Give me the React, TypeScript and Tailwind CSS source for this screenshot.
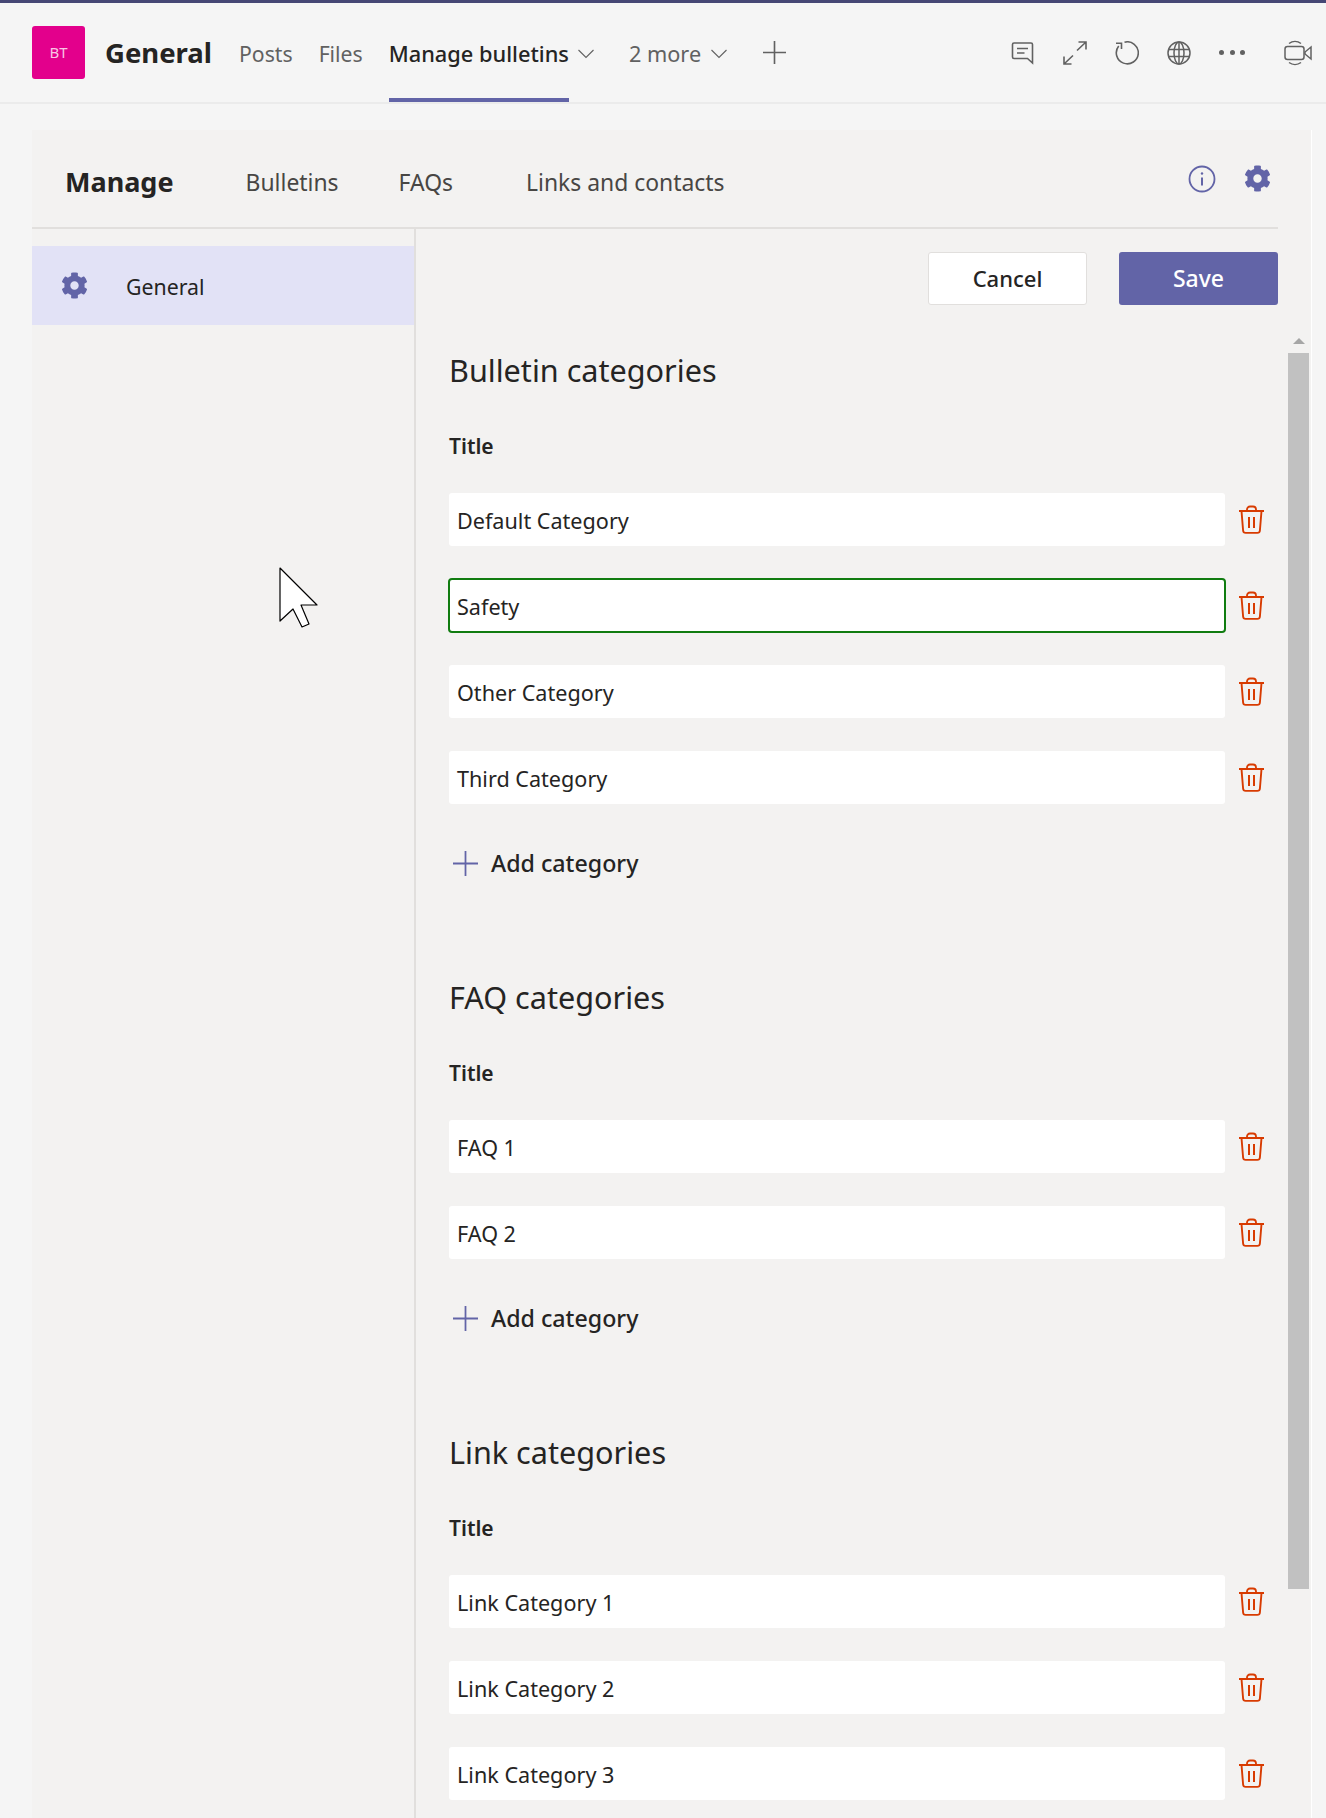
import { FaCog } from "react-icons/fa";

function TrashIcon() {
  return (
    <svg width="25" height="30" viewBox="0 0 25 30" fill="none" stroke="#d83b01" strokeWidth="2" className="shrink-0">
      <path d="M0 6h25" />
      <path d="M8 6V4.5a3 3 0 0 1 3-3h3a3 3 0 0 1 3 3V6" strokeWidth="1.8" />
      <path d="M2.5 6l1.6 19.5a2.6 2.6 0 0 0 2.6 2.4h11.6a2.6 2.6 0 0 0 2.6-2.4L22.5 6" strokeWidth="1.9" />
      <path d="M10 12v11M15 12v11" />
    </svg>
  );
}

function PlusIcon({ size, color }: { size: number; color: string }) {
  return (
    <svg width={size} height={size} viewBox="0 0 24 24" fill="none" stroke={color} strokeWidth="1.7" className="shrink-0">
      <path d="M12 0v24M0 12h24" />
    </svg>
  );
}

function Chevron() {
  return (
    <svg width="16" height="10" viewBox="0 0 16 10" fill="none" stroke="#616161" strokeWidth="1.1" className="shrink-0 mt-[2px]">
      <path d="M.5 1L8 8.5 15.5 1" />
    </svg>
  );
}

function CategoryRow({ value, focused }: { value: string; focused?: boolean }) {
  return (
    <div className="flex items-center mb-[33px]">
      <div
        className={`w-[776px] h-[53px] pt-[3px] bg-white rounded-[3px] flex items-center pl-2 text-[21.6px] text-[#252423] ${
          focused ? "outline-2 outline-[#107c10] -outline-offset-1" : ""
        }`}
      >
        {value}
      </div>
      <div className="ml-[14px]">
        <TrashIcon />
      </div>
    </div>
  );
}

function Section({ title, rows, focusedRow, last }: { title: string; rows: string[]; focusedRow?: number; last?: boolean }) {
  return (
    <div className={last ? "" : "mb-[100px]"}>
      <div className="h-[42px] leading-[40px] text-[30.6px] text-[#252423]">{title}</div>
      <div className="mt-[40px] mb-[33px] h-[28px] leading-[28px] text-[21px] font-semibold text-[#252423]">Title</div>
      {rows.map((r, i) => (
        <CategoryRow key={r} value={r} focused={i === focusedRow} />
      ))}
      {!last && (
        <div className="flex items-center h-[28px] mt-[45px]">
          <div className="ml-[4px]">
            <PlusIcon size={25} color="#6264a7" />
          </div>
          <span className="ml-[13px] text-[23.2px] font-medium text-[#252423]">Add category</span>
        </div>
      )}
    </div>
  );
}

function HeaderIcons() {
  return (
    <div className="ml-auto flex items-center text-[#616161]">
      <svg width="24" height="24" viewBox="0 0 24 24" fill="none" stroke="currentColor" strokeWidth="1.6">
        <path d="M3 2h17a1.5 1.5 0 0 1 1.5 1.5V22l-5-4.5H3A1.5 1.5 0 0 1 1.5 16V3.5A1.5 1.5 0 0 1 3 2z" />
        <path d="M6 7.5h11M6 12h7.5" />
      </svg>
      <svg width="24" height="24" viewBox="0 0 24 24" fill="none" stroke="currentColor" strokeWidth="1.6" className="ml-[28px]">
        <path d="M14 9.5L23 1M15.5 1H23v7.5M10 14.5L1 23M1 15.5V23h7.5" />
      </svg>
      <svg width="24" height="24" viewBox="0 0 24 24" fill="none" stroke="currentColor" strokeWidth="1.6" className="ml-[28px]">
        <path d="M9.5 1.2A11 11 0 1 1 3.7 5" />
        <path d="M1 2.2H6.5V8" />
      </svg>
      <svg width="24" height="24" viewBox="0 0 24 24" fill="none" stroke="currentColor" strokeWidth="1.5" className="ml-[28px]">
        <circle cx="12" cy="12" r="11" />
        <ellipse cx="12" cy="12" rx="5" ry="11" />
        <path d="M12 1v22M1.8 8.5h20.4M1.8 15.5h20.4" />
      </svg>
      <div className="ml-[28px] w-[26px] flex justify-between">
        <span className="w-[5px] h-[5px] rounded-full bg-[#616161]" />
        <span className="w-[5px] h-[5px] rounded-full bg-[#616161]" />
        <span className="w-[5px] h-[5px] rounded-full bg-[#616161]" />
      </div>
      <svg width="28" height="28" viewBox="0 0 28 28" fill="none" stroke="currentColor" strokeWidth="1.5" className="ml-[39px] mr-[14px]">
        <rect x="1" y="7.5" width="19" height="13" rx="2.5" />
        <path d="M27 8v12l-6-5v-2z" />
        <path d="M5 4.5A10 10 0 0 1 17 4.5M5 23.5a10 10 0 0 0 12 0" />
      </svg>
    </div>
  );
}

export default function App() {
  return (
    <div className="h-[1818px] overflow-hidden bg-[#f5f5f5] relative font-['Noto_Sans','Open_Sans',sans-serif]">
      {/* top app bar */}
      <div className="h-[104px] border-t-[3px] border-[#464775] border-b-2 border-b-[#ebebeb] flex items-center pl-8">
        <div className="w-[53px] h-[53px] mb-[1px] rounded-[3px] bg-[#e3008c] flex items-center justify-center text-[15px] text-[#f8c6e4]">BT</div>
        <div className="ml-5 text-[27.5px] font-bold text-[#252423] mt-[1px]">General</div>
        <div className="ml-[27px] text-[21.2px] text-[#616161] mt-[3px]">Posts</div>
        <div className="ml-[26px] text-[21.2px] text-[#616161] mt-[3px]">Files</div>
        <div className="ml-[26px] relative h-full pt-[3px] flex items-center text-[21.8px] font-medium text-[#252423]">
          Manage bulletins
          <span className="absolute left-0 right-0 bottom-0 h-1 bg-[#6264a7]" />
        </div>
        <div className="ml-[9px]">
          <Chevron />
        </div>
        <div className="ml-[35px] text-[21.7px] text-[#616161] mt-[3px]">2 more</div>
        <div className="ml-[10px]">
          <Chevron />
        </div>
        <div className="ml-[36px]">
          <PlusIcon size={23} color="#616161" />
        </div>
        <HeaderIcons />
      </div>

      {/* manage panel */}
      <div className="mt-[26px] ml-8 w-[1280px] h-[1688px] bg-[#f3f2f1] border-r border-white">
        <div className="w-[1246px] h-[99px] border-b-2 border-[#e1dfdd] flex items-center pl-[33px]">
          <div className="text-[27px] font-bold text-[#252423] mt-[7px]">Manage</div>
          <div className="ml-[72px] text-[22.9px] text-[#484644] mt-[9px]">Bulletins</div>
          <div className="ml-[60px] text-[22.9px] text-[#484644] mt-[9px]">FAQs</div>
          <div className="ml-[73px] text-[22.9px] text-[#484644] mt-[9px]">Links and contacts</div>
          <svg width="28" height="28" viewBox="0 0 28 28" fill="none" stroke="#6264a7" className="ml-auto">
            <circle cx="14" cy="14" r="12.5" strokeWidth="1.8" />
            <path d="M14 12.5v8" strokeWidth="2" />
            <circle cx="14" cy="8.5" r="1.2" fill="#6264a7" stroke="none" />
          </svg>
          <FaCog className="w-[27px] h-[27px] ml-[28px] mr-[7px] text-[#6264a7]" />
        </div>

        <div className="flex">
          <div className="w-[384px] h-[1600px] border-r-2 border-[#e1dfdd] pt-[17px] shrink-0">
            <div className="h-[79px] bg-[#e2e2f6] flex items-center pl-[29px]">
              <FaCog className="w-[27px] h-[27px] text-[#6264a7]" />
              <span className="ml-[38px] mt-[2px] text-[21.3px] text-[#252423]">General</span>
            </div>
          </div>

          <div className="flex-1 min-w-0">
            <div className="flex justify-end gap-8 pt-[23px] pr-[33px]">
              <button className="w-[159px] h-[53px] bg-white border border-[#e1dfdd] rounded-[3px] text-[22px] font-medium text-[#252423]">Cancel</button>
              <button className="w-[159px] h-[53px] bg-[#6264a7] rounded-[3px] text-[23px] font-medium text-white">Save</button>
            </div>

            <div className="flex mt-[23px]">
              <div className="pl-[33px] pt-[22px] w-[872px]">
                <Section title="Bulletin categories" rows={["Default Category", "Safety", "Other Category", "Third Category"]} focusedRow={1} />
                <Section title="FAQ categories" rows={["FAQ 1", "FAQ 2"]} />
                <Section title="Link categories" rows={["Link Category 1", "Link Category 2", "Link Category 3"]} last />
              </div>
              <div className="w-[21px] pt-[10px] flex flex-col items-center">
                <div className="w-0 h-0 border-x-[6px] border-x-transparent border-b-[6px] border-b-[#a6a6a6]" />
                <div className="w-[21px] h-[1236px] mt-[9px] bg-[#c1c1c1]" />
              </div>
            </div>
          </div>
        </div>
      </div>

      {/* mouse pointer over the page */}
      <svg width="40" height="62" viewBox="0 0 40 62" className="absolute left-[279px] top-[567px]">
        <path d="M1 1L38 38H22L30 57L23 60L14 42L1 54Z" fill="#fff" stroke="#000" strokeWidth="1.2" strokeLinejoin="round" />
      </svg>
    </div>
  );
}
